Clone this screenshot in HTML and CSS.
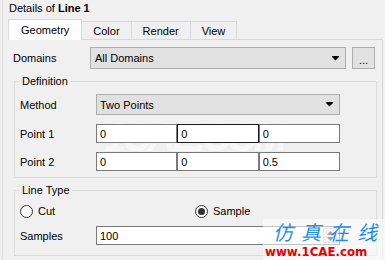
FILE: index.html
```html
<!DOCTYPE html>
<html lang="en">
<head>
  <meta charset="UTF-8" />
  <title>Details of Line 1</title>
  <link rel="stylesheet" href="styles.css">
</head>
<body>
  <div class="frame">
    <div class="title">Details of <b>Line 1</b></div>

    <div class="tabs">
      <div class="tab active">Geometry</div>
      <div class="tab">Color</div>
      <div class="tab">Render</div>
      <div class="tab">View</div>
    </div>

    <div class="pane">
      <div class="domains">
        <label>Domains</label>
        <div class="combo">
          <span>All Domains</span>
          <svg class="arrow" width="7" height="5" viewBox="0 0 7 5"><rect x="0" y="0" width="7" height="1" fill="#000"/><path d="M0 1h7L3.5 4.5z" fill="#000"/></svg>
        </div>
        <button class="more">...</button>
      </div>

      <fieldset class="group">
        <legend>Definition</legend>
        <div class="field method">
          <label>Method</label>
          <div class="combo">
            <span>Two Points</span>
            <svg class="arrow" width="7" height="5" viewBox="0 0 7 5"><rect x="0" y="0" width="7" height="1" fill="#000"/><path d="M0 1h7L3.5 4.5z" fill="#000"/></svg>
          </div>
        </div>
        <div class="field">
          <label>Point 1</label>
          <div class="vec">
            <input type="text" value="0">
            <input type="text" class="focus" value="0">
            <input type="text" value="0">
          </div>
        </div>
        <div class="field">
          <label>Point 2</label>
          <div class="vec">
            <input type="text" value="0">
            <input type="text" value="0">
            <input type="text" value="0.5">
          </div>
        </div>
      </fieldset>

      <fieldset class="group linetype">
        <legend>Line Type</legend>
        <div class="radios">
          <div class="radio first"><span class="dot"></span>Cut</div>
          <div class="radio"><span class="dot on"></span>Sample</div>
        </div>
        <div class="field samples">
          <label>Samples</label>
          <div class="spin">
            <input type="text" value="100">
            <span class="spinner">
              <svg width="7" height="4" viewBox="0 0 7 4"><path d="M0 4h7L3.5 0z" fill="#333"/></svg>
              <svg width="7" height="4" viewBox="0 0 7 4"><path d="M0 0h7L3.5 4z" fill="#333"/></svg>
            </span>
          </div>
        </div>
      </fieldset>
    </div>
  </div>

  <div class="mark-faint">1CAE.COM</div>
  <div class="mark">
    <div class="mark-cn">仿真在线</div>
    <div class="mark-url">www.1CAE.com</div>
  </div>
</body>
</html>
```

FILE: styles.css
```css
* { box-sizing: border-box; }
body {
  margin: 0;
  background: #f0f0f0;
  font-family: "Liberation Sans", Arial, sans-serif;
  font-size: 11px;
  color: #000;
  overflow: hidden;
}
.frame {
  margin-left: 2px;
  height: 260px;
  border-left: 1px solid #dadada;
}
.title {
  height: 19px;
  padding: 1px 0 0 6px;
  line-height: 15px;
}
.tabs {
  display: flex;
  align-items: flex-start;
  height: 21px;
  margin-left: 5px;
}
.tab {
  height: 18px;
  margin-top: 2px;
  margin-left: -1px;
  padding: 0 11px;
  line-height: 18px;
  border: 1px solid #d9d9d9;
  border-bottom: none;
}
.tab.active {
  position: relative;
  z-index: 1;
  height: 21px;
  margin-top: 0;
  margin-left: 0;
  padding: 0 12px;
  line-height: 20px;
  background: #fff;
}
.pane {
  width: 375px;
  height: 222px;
  margin: -1px 0 0 5px;
  padding: 7px 5px 0 5px;
  border-top: 1px solid #d9d9d9;
  border-right: 1px solid #d9d9d9;
}
.domains {
  display: flex;
  align-items: center;
  height: 22px;
  padding-right: 2px;
}
.domains label { width: 77px; }
.combo {
  display: flex;
  align-items: center;
  justify-content: space-between;
  height: 22px;
  padding: 0 6px 0 4px;
  background: #e1e1e1;
  border: 1px solid #adadad;
}
.domains .combo { width: 256px; }
.more {
  width: 23px;
  height: 22px;
  margin-left: 6px;
  padding: 3px 0 0;
  font: inherit;
  background: #e1e1e1;
  border: 1px solid #adadad;
}
.group {
  margin: 6px 0 0 1px;
  padding: 6px 36px 6px 5px;
  min-width: 0;
  border: 1px solid #dcdcdc;
}
.group legend {
  padding: 0 2px;
  line-height: 13px;
}
.field {
  display: flex;
  align-items: center;
  height: 19px;
  margin-top: 9px;
}
.field label { width: 76px; flex: none; }
.field.method { height: 21px; margin-top: 0; }
.field .combo { flex: 1; height: 21px; padding-left: 3px; }
.vec {
  display: flex;
  flex: 1;
  min-width: 0;
  height: 19px;
}
.vec input, .spin {
  flex: 1;
  width: 0;
  min-width: 0;
  height: 19px;
  border: 1px solid #7a7a7a;
  background: #fff;
}
input {
  margin: 0;
  padding: 0 3px;
  font: inherit;
  color: #000;
  outline: none;
}
.vec input.focus { border-color: #1a1a1a; }
.linetype { padding-top: 7px; padding-bottom: 10px; }
.radios {
  display: flex;
  align-items: center;
  height: 14px;
}
.radio {
  display: flex;
  align-items: center;
  gap: 5px;
}
.radio.first { width: 175px; }
.dot {
  display: flex;
  align-items: center;
  justify-content: center;
  width: 13px;
  height: 13px;
  border: 1px solid #333;
  border-radius: 50%;
  background: #fff;
}
.dot.on::after {
  content: "";
  width: 7px;
  height: 7px;
  border-radius: 50%;
  background: #333;
}
.field.samples { margin-top: 8px; }
.spin {
  display: flex;
  align-items: center;
}
.spin input {
  flex: 1;
  width: 0;
  min-width: 0;
  height: 17px;
  border: none;
}
.spinner {
  display: flex;
  flex-direction: column;
  align-items: center;
  justify-content: center;
  gap: 2px;
  width: 14px;
  height: 15px;
  margin-right: 2px;
  background: #e6e6e6;
  border: 1px solid #c8c8c8;
}
.mark-faint {
  position: absolute;
  z-index: -1;
  left: 104px;
  top: 120px;
  font-size: 40px;
  font-weight: bold;
  font-style: italic;
  line-height: 34px;
  letter-spacing: -4px;
  color: rgba(255, 255, 255, 0.55);
  pointer-events: none;
}
.mark {
  position: absolute;
  left: 263px;
  top: 219px;
  width: 122px;
  height: 41px;
  padding: 2px 0 0 2px;
  background: rgba(255, 255, 255, 0.55);
  pointer-events: none;
}
.mark-cn {
  padding-left: 8px;
  font-family: "Noto Sans CJK SC", sans-serif;
  font-size: 20px;
  font-style: italic;
  line-height: 22px;
  letter-spacing: 8px;
  color: #1e8ee6;
}
.mark-url {
  margin-top: 3px;
  font-family: "DejaVu Sans", sans-serif;
  font-size: 11.8px;
  font-weight: bold;
  line-height: 12px;
  color: #e60000;
}
```
